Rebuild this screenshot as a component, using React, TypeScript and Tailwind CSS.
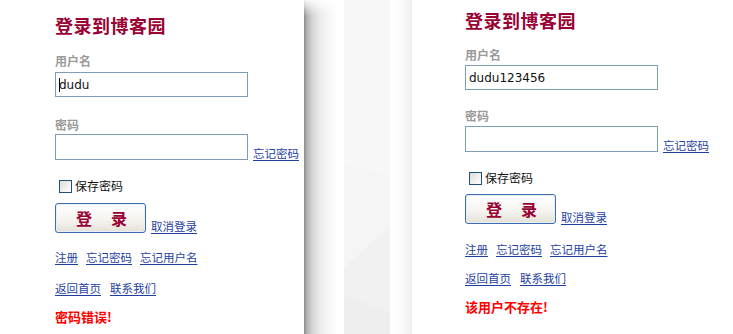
import React from "react";

type Sp = {
  pt: number;
  label1: number;
  in1: number;
  label2: number;
  in2: number;
  cb: number;
  btn: number;
  row1: number;
  row2: number;
  err: number;
};

const FONT = { fontFamily: '"Noto Sans CJK SC", "Noto Sans", sans-serif' };
const MONO = { fontFamily: '"DejaVu Sans", "Noto Sans CJK SC", sans-serif' };

function Link({ children }: { children: React.ReactNode }) {
  return (
    <a className="text-[11.5px] leading-[14px] text-[#1e3f9f] underline underline-offset-[2px] decoration-[#1e3f9f] cursor-pointer whitespace-nowrap">
      {children}
    </a>
  );
}

function Panel({
  user,
  caret,
  error,
  sp,
}: {
  user: string;
  caret: boolean;
  error: string;
  sp: Sp;
}) {
  return (
    <div className="flex flex-col" style={FONT}>
      <div
        className="text-[18px] leading-[20px] font-bold text-[#990033] tracking-[0.5px] whitespace-nowrap"
        style={{ marginTop: sp.pt }}
      >
        登录到博客园
      </div>
      <div
        className="text-[12px] leading-[14px] font-bold text-[#9a9a9a]"
        style={{ marginTop: sp.label1 }}
      >
        用户名
      </div>
      <div
        className="w-[193px] h-[25px] border border-[#7f9db9] bg-white flex items-center pl-[3px] text-[12px] text-[#111]"
        style={{ marginTop: sp.in1, ...MONO }}
      >
        {caret && <span className="inline-block w-px h-[14px] bg-black mr-[-1px]" />}
        <span>{user}</span>
      </div>
      <div
        className="text-[12px] leading-[14px] font-bold text-[#9a9a9a]"
        style={{ marginTop: sp.label2 }}
      >
        密码
      </div>
      <div className="flex items-end gap-[5px]" style={{ marginTop: sp.in2 }}>
        <div className="w-[193px] h-[26px] border border-[#7f9db9] bg-white" />
        <Link>忘记密码</Link>
      </div>
      <div className="flex items-center gap-[3px] pl-[4px]" style={{ marginTop: sp.cb }}>
        <span className="inline-block w-[13px] h-[13px] border border-[#1c5180] bg-[linear-gradient(135deg,#dcdcd7,#ffffff)]" />
        <span className="text-[12px] leading-[14px] text-[#111]">保存密码</span>
      </div>
      <div className="flex items-end gap-[5px]" style={{ marginTop: sp.btn }}>
        <button className="w-[91px] h-[30px] rounded-[3px] border border-[#3c6db0] bg-[linear-gradient(to_bottom,#ffffff,#f4f3ee_60%,#e3e1d6)] shadow-[inset_0_0_0_1px_#e6eefa] flex items-center justify-center gap-[19px] text-[16px] font-bold text-[#990033] pl-[2px]">
          <span>登</span>
          <span>录</span>
        </button>
        <Link>取消登录</Link>
      </div>
      <div className="flex gap-[8px]" style={{ marginTop: sp.row1 }}>
        <Link>注册</Link>
        <Link>忘记密码</Link>
        <Link>忘记用户名</Link>
      </div>
      <div className="flex gap-[9px]" style={{ marginTop: sp.row2 }}>
        <Link>返回首页</Link>
        <Link>联系我们</Link>
      </div>
      <div
        className="text-[13px] leading-[14px] font-bold text-[#ff0000]"
        style={{ marginTop: sp.err }}
      >
        {error}
      </div>
    </div>
  );
}

export default function App() {
  return (
    <div className="flex h-[334px] w-[733px] overflow-hidden bg-white">
      <div className="w-[304px] shrink-0 bg-white pl-[55px]">
        <Panel
          user="dudu"
          caret
          error="密码错误!"
          sp={{ pt: 15, label1: 19, in1: 4, label2: 21, in2: 2, cb: 19, btn: 10, row1: 17, row2: 17, err: 15 }}
        />
      </div>
      <div className="w-[40px] shrink-0 bg-[linear-gradient(to_bottom,rgba(255,255,255,0.9),rgba(255,255,255,0)_16px),linear-gradient(to_right,#8a8a8a_0px,#b4b4b4_3px,#d2d2d2_8px,#e8e8e8_15px,#f6f6f6_24px,#ffffff_34px)]" />
      <div className="w-[46px] shrink-0 bg-[#f5f5f5]">
        <svg width="46" height="334" viewBox="0 0 46 334" className="block">
          <polygon points="0,0 46,0 46,176 0,164" fill="#f7f7f7" />
          <polygon points="0,268 46,226 46,334 0,334" fill="#f1f1f1" />
          <polygon points="0,296 46,312 46,334 0,334" fill="#eeeeee" />
        </svg>
      </div>
      <div className="w-[22px] shrink-0 bg-[linear-gradient(to_right,#ffffff_0px,#fcfcfc_10px,#f0f0f0_21px,#e8e8e8_22px)]" />
      <div className="flex-1 bg-white pl-[53px]">
        <Panel
          user="dudu123456"
          caret={false}
          error="该用户不存在!"
          sp={{ pt: 10, label1: 18, in1: 3, label2: 19, in2: 3, cb: 19, btn: 9, row1: 18, row2: 15, err: 15 }}
        />
      </div>
    </div>
  );
}
